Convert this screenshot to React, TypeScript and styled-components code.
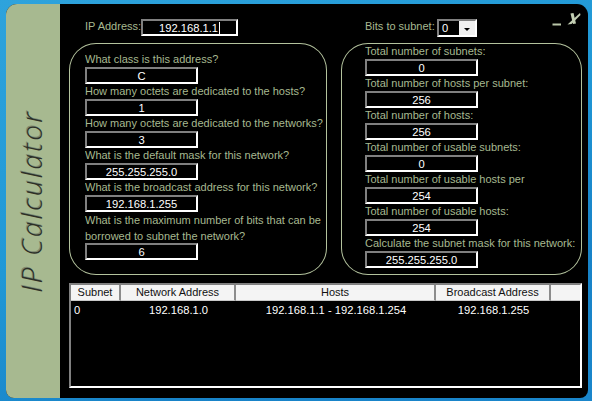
import React from 'react'
import styled, { createGlobalStyle } from 'styled-components'

const GlobalStyle = createGlobalStyle`
  html, body { margin: 0; padding: 0; height: 100%; }
  body {
    overflow: hidden;
    font-family: "Liberation Sans", Arial, sans-serif;
    background: linear-gradient(160deg, #2ea3dc 0%, #2098d6 45%, #1883c8 75%, #1a86cb 100%);
  }
`

const Screen = styled.div`
  width: 592px;
  height: 401px;
  padding: 4px 4px 3px 6px;
  box-sizing: border-box;
`

const Window = styled.div`
  position: relative;
  display: flex;
  height: 100%;
  background: #000;
  border-radius: 11px 11px 8px 8px;
  overflow: hidden;
`

const Sidebar = styled.div`
  width: 54px;
  flex: none;
  display: flex;
  align-items: center;
  justify-content: center;
  background: #a7b990;
`

const Title = styled.div`
  writing-mode: vertical-rl;
  transform: rotate(180deg);
  font-family: "Open Sans", sans-serif;
  font-style: italic;
  font-weight: 300;
  font-size: 28px;
  letter-spacing: 2.2px;
  color: #2b2f27;
  text-shadow: 1px -1px 0 #7f8a72;
  margin-left: -5px;
`

const Main = styled.div`
  flex: 1;
  display: flex;
  flex-direction: column;
  padding: 15px 6px 0 9px;
  min-width: 0;
`

const Header = styled.div`
  display: flex;
  height: 24px;
  padding-left: 16px;
`

const HeaderGroup = styled.div<{ $width?: number }>`
  display: flex;
  align-items: flex-start;
  width: ${p => (p.$width ? `${p.$width}px` : 'auto')};
`

const HeaderLabel = styled.span<{ $width: number }>`
  width: ${p => p.$width}px;
  height: 15px;
  line-height: 14px;
  font-size: 11px;
  color: #a7b990;
  white-space: nowrap;
`

const Panels = styled.div`
  display: flex;
  gap: 14px;
`

const Panel = styled.section<{ $width: number; $left: number; $top: number }>`
  width: ${p => p.$width}px;
  height: 232px;
  box-sizing: border-box;
  padding: ${p => p.$top}px 0 0 ${p => p.$left}px;
  border-radius: 27px;
  box-shadow: inset 0 0 0 1px #b3c29d;
`

const Question = styled.div<{ $lines?: number; $width?: number }>`
  height: ${p => (p.$lines || 1) * 16 - 1}px;
  width: ${p => p.$width || 240}px;
  overflow: hidden;
  line-height: ${p => (p.$lines ? 16 : 15)}px;
  font-size: 11px;
  color: #a7b990;
`

const Field = styled.div<{ $width?: number }>`
  box-sizing: border-box;
  width: ${p => p.$width || 113}px;
  height: 17px;
  border: 2px solid;
  border-color: #808080 #fff #fff #808080;
  background: #000;
  color: #fff;
  font-size: 11.2px;
  line-height: 14px;
  text-align: center;
  white-space: nowrap;
`

const Caret = styled.span`
  display: inline-block;
  width: 1px;
  height: 12px;
  margin-left: 1px;
  vertical-align: -2px;
  background: #fff;
`

const Select = styled.div`
  box-sizing: border-box;
  width: 40px;
  height: 18px;
  display: flex;
  border: 2px solid;
  border-color: #808080 #fff #fff #808080;
  background: #000;
  color: #fff;
  font-size: 11.2px;
  line-height: 14px;
`

const SelectValue = styled.span`
  flex: 1;
  padding-left: 3px;
`

const SelectButton = styled.span`
  width: 16px;
  display: flex;
  align-items: center;
  justify-content: center;
  background: #f0f0f0;
`

const Arrow = styled.span`
  margin-top: 2px;
  border-left: 3px solid transparent;
  border-right: 3px solid transparent;
  border-top: 3px solid #000;
`

const WindowButtons = styled.svg`
  position: absolute;
  top: 6px;
  right: 6px;
`

const Table = styled.div`
  margin-top: 8px;
  height: 105px;
  box-sizing: border-box;
  border: 2px solid;
  border-color: #808080 #fff #fff #808080;
`

const Row = styled.div`
  display: grid;
  grid-template-columns: 50px 115px 200px 115px 29px;
`

const HeaderCell = styled.div`
  box-sizing: border-box;
  height: 16px;
  background: #f4f4f4;
  color: #111;
  font-size: 11px;
  line-height: 15px;
  text-align: center;
  border-right: 2px solid #8c8c8c;
  border-bottom: 1px solid #c8c8c8;
  &:last-child { border-right: 0; }
`

const Cell = styled.div<{ $left?: boolean }>`
  height: 17px;
  margin-top: 1px;
  padding-left: ${p => (p.$left ? '3px' : '0')};
  color: #fff;
  font-size: 11.2px;
  line-height: 17px;
  text-align: ${p => (p.$left ? 'left' : 'center')};
`

const leftRows = [
  { q: 'What class is this address?', a: 'C' },
  { q: 'How many octets are dedicated to the hosts?', a: '1' },
  { q: 'How many octets are dedicated to the networks?', a: '3' },
  { q: 'What is the default mask for this network?', a: '255.255.255.0' },
  { q: 'What is the broadcast address for this network?', a: '192.168.1.255' },
  { q: 'What is the maximum number of bits that can be borrowed to subnet the network?', a: '6', lines: 2 },
]

const rightRows = [
  { q: 'Total number of subnets:', a: '0' },
  { q: 'Total number of hosts per subnet:', a: '256' },
  { q: 'Total number of hosts:', a: '256' },
  { q: 'Total number of usable subnets:', a: '0' },
  { q: 'Total number of usable hosts per subnet:', a: '254', width: 170 },
  { q: 'Total number of usable hosts:', a: '254' },
  { q: 'Calculate the subnet mask for this network:', a: '255.255.255.0' },
]

const columns = ['Subnet', 'Network Address', 'Hosts', 'Broadcast Address', '']

export default function App() {
  return (
    <Screen>
      <GlobalStyle />
      <Window>
        <Sidebar>
          <Title>IP Calculator</Title>
        </Sidebar>
        <Main>
          <Header>
            <HeaderGroup $width={280}>
              <HeaderLabel $width={56}>IP Address:</HeaderLabel>
              <Field $width={97}>192.168.1.1<Caret /></Field>
            </HeaderGroup>
            <HeaderGroup>
              <HeaderLabel $width={72}>Bits to subnet:</HeaderLabel>
              <Select>
                <SelectValue>0</SelectValue>
                <SelectButton><Arrow /></SelectButton>
              </Select>
            </HeaderGroup>
          </Header>
          <Panels>
            <Panel $width={258} $left={16} $top={9}>
              {leftRows.map(r => (
                <React.Fragment key={r.q}>
                  <Question $lines={r.lines}>{r.q}</Question>
                  <Field>{r.a}</Field>
                </React.Fragment>
              ))}
            </Panel>
            <Panel $width={241} $left={24} $top={1}>
              {rightRows.map(r => (
                <React.Fragment key={r.q}>
                  <Question $width={r.width || 214}>{r.q}</Question>
                  <Field>{r.a}</Field>
                </React.Fragment>
              ))}
            </Panel>
          </Panels>
          <Table>
            <Row>
              {columns.map(c => <HeaderCell key={c}>{c}</HeaderCell>)}
            </Row>
            <Row>
              <Cell $left>0</Cell>
              <Cell>192.168.1.0</Cell>
              <Cell>192.168.1.1 - 192.168.1.254</Cell>
              <Cell>192.168.1.255</Cell>
            </Row>
          </Table>
        </Main>
        <WindowButtons width="30" height="18" viewBox="0 0 30 18" fill="none">
          <path d="M0.5 14.5H9" stroke="#b9c6a8" strokeWidth="2" />
          <path d="M18.5 3.5L21.5 3L24 13.5L21 14Z" fill="#c3cfb3" />
          <path d="M28 3L15.5 14.5L19.5 14L28.5 5Z" fill="#c3cfb3" />
        </WindowButtons>
      </Window>
    </Screen>
  )
}
